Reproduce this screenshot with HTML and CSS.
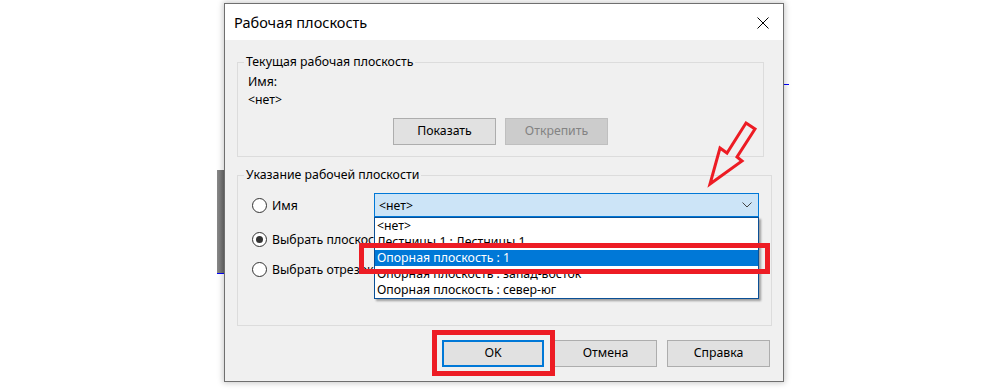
FILE: index.html
```html
<!DOCTYPE html>
<html lang="ru">
<head>
<meta charset="utf-8">
<title>Рабочая плоскость</title>
<link rel="stylesheet" href="styles.css">
</head>
<body>
<div class="scene">
  <div class="bg-bar"></div>
  <div class="bg-line bg-line-left"></div>
  <div class="bg-line bg-line-right"></div>

  <div class="dialog">
    <div class="titlebar">
      <span class="title">Рабочая плоскость</span>
      <svg class="close" width="12" height="12" viewBox="0 0 12 12"><path d="M0.5 0.5 L11.5 11.5 M11.5 0.5 L0.5 11.5" stroke="#000" stroke-width="1" fill="none"/></svg>
    </div>
    <div class="body">
      <fieldset class="group group-current">
        <legend>Текущая рабочая плоскость</legend>
        <div class="group-body">
          <div class="line">Имя:</div>
          <div class="line line-value">&lt;нет&gt;</div>
          <div class="btn-row">
            <button class="btn">Показать</button>
            <button class="btn btn-disabled">Открепить</button>
          </div>
        </div>
      </fieldset>

      <fieldset class="group group-spec">
        <legend>Указание рабочей плоскости</legend>
        <div class="group-body">
          <div class="row row-1">
            <span class="radio"></span><span class="rlabel">Имя</span>
            <div class="combo">
              <span class="combo-text">&lt;нет&gt;</span>
              <svg class="chev" width="10" height="6" viewBox="0 0 10 6"><path d="M0.5 0.5 L5 5 L9.5 0.5" stroke="#444" stroke-width="1" fill="none"/></svg>
            </div>
          </div>
          <div class="row row-2">
            <span class="radio radio-on"></span><span class="rlabel">Выбрать плоскость</span>
          </div>
          <div class="row row-3">
            <span class="radio"></span><span class="rlabel">Выбрать отрезок</span>
          </div>
        </div>
        <ul class="dropdown">
          <li>&lt;нет&gt;</li>
          <li>Лестницы 1 : Лестницы 1</li>
          <li class="sel">Опорная плоскость : 1</li>
          <li>Опорная плоскость : запад-восток</li>
          <li>Опорная плоскость : север-юг</li>
        </ul>
      </fieldset>

      <div class="footer">
        <button class="btn btn-default">OK</button>
        <button class="btn">Отмена</button>
        <button class="btn">Справка</button>
      </div>
    </div>
  </div>

  <div class="mark mark-item"></div>
  <div class="mark mark-ok"></div>
  <svg class="arrow" width="70" height="80" viewBox="0 0 70 80">
    <polygon points="46,7 55,13 37,41 42,45 10,68 20,32 27,37" fill="none" stroke="#ed1c24" stroke-width="3" stroke-linejoin="miter"/>
  </svg>
</div>
</body>
</html>
```

FILE: styles.css
```css
* { box-sizing: border-box; }

html, body {
  margin: 0;
  padding: 0;
  background: #ffffff;
}

body {
  font-family: "Noto Sans", "Open Sans", sans-serif;
  font-size: 12.3px;
  color: #000;
}

.scene {
  position: relative;
  width: 1001px;
  height: 390px;
  overflow: hidden;
  padding: 3px 0 0 224px;
}

.bg-bar {
  position: absolute;
  left: 217px;
  top: 170px;
  width: 7px;
  height: 103px;
  background: linear-gradient(to right, #8a8a8a, #6a6a6a);
}

.bg-line {
  position: absolute;
  height: 1px;
  background: #0000ff;
}

.bg-line-left { left: 217px; top: 273px; width: 7px; }
.bg-line-right { left: 784px; top: 84px; width: 5px; }

.dialog {
  position: relative;
  width: 560px;
  height: 379px;
  border: 1px solid #6f6f6f;
  background: #f0f0f0;
  box-shadow: 0 0 6px 1px rgba(0, 0, 0, 0.22);
  display: flex;
  flex-direction: column;
}

.titlebar {
  height: 36px;
  background: #ffffff;
  display: flex;
  align-items: center;
  justify-content: space-between;
  padding: 0 14px 0 9px;
  flex: none;
}

.title {
  font-size: 14.5px;
  color: #000;
  padding-bottom: 1px;
}

.close { display: block; margin-top: 1px; }

.body {
  flex: 1;
  padding: 14px 0 0 12px;
  display: flex;
  flex-direction: column;
}

.group {
  margin: 0;
  border: 1px solid #dcdcdc;
  padding: 0;
  min-width: 0;
  position: relative;
}

.group legend {
  padding: 0 2px;
  margin-left: 6px;
  line-height: 16px;
  color: #000;
}

.group-current {
  width: 527px;
}

.group-current .group-body {
  padding: 4px 10px 11px 10px;
}

.line { line-height: 16px; }
.line-value { margin-top: 2px; }

.btn-row {
  display: flex;
  justify-content: center;
  gap: 9px;
  margin-top: 10px;
}

.btn {
  font-family: inherit;
  font-size: 12.3px;
  width: 103px;
  height: 27px;
  background: #e1e1e1;
  border: 1px solid #adadad;
  color: #000;
  padding: 0;
  margin: 0;
  line-height: 1;
}

.btn-disabled {
  background: #cccccc;
  border-color: #bfbfbf;
  color: #838383;
}

.btn-default {
  width: 102px;
  border: 2px solid #0078d7;
}

.group-spec {
  width: 535px;
  margin-top: 10px;
  height: 159px;
}

.group-spec .group-body {
  padding: 10px 0 0 14px;
}

.row {
  display: flex;
  align-items: center;
  height: 24px;
}

.row-2 { margin-top: 10px; }
.row-3 { margin-top: 6px; }

.radio {
  width: 15px;
  height: 15px;
  border: 1px solid #333;
  border-radius: 50%;
  background: #fff;
  flex: none;
  position: relative;
}

.radio-on::after {
  content: "";
  position: absolute;
  left: 3px;
  top: 3px;
  width: 7px;
  height: 7px;
  border-radius: 50%;
  background: #333;
}

.rlabel {
  margin-left: 5px;
  white-space: nowrap;
}

.combo {
  margin-left: auto;
  margin-right: 12px;
  width: 385px;
  height: 24px;
  border: 1px solid #0078d7;
  background: #cce4f7;
  display: flex;
  align-items: center;
  justify-content: space-between;
  padding: 0 6px 0 4px;
}

.chev { display: block; }

.dropdown {
  position: absolute;
  left: 136px;
  top: 34px;
  width: 385px;
  margin: 0;
  padding: 0;
  list-style: none;
  background: #fff;
  border: 1px solid #0a4f96;
  box-shadow: 2px 2px 2px rgba(0, 0, 0, 0.35);
}

.dropdown li {
  height: 16px;
  line-height: 16px;
  padding-left: 2px;
  white-space: nowrap;
}

.dropdown li.sel {
  background: #0078d7;
  color: #fff;
}

.footer {
  display: flex;
  justify-content: flex-end;
  gap: 10px;
  padding-right: 13px;
  margin-top: 14px;
}

.mark {
  position: absolute;
  border: 5px solid #ed1c24;
}

.mark-item {
  left: 359px;
  top: 243px;
  width: 411px;
  height: 31px;
}

.mark-ok {
  left: 432px;
  top: 330px;
  width: 123px;
  height: 46px;
}

.arrow {
  position: absolute;
  left: 700px;
  top: 116px;
}
```
